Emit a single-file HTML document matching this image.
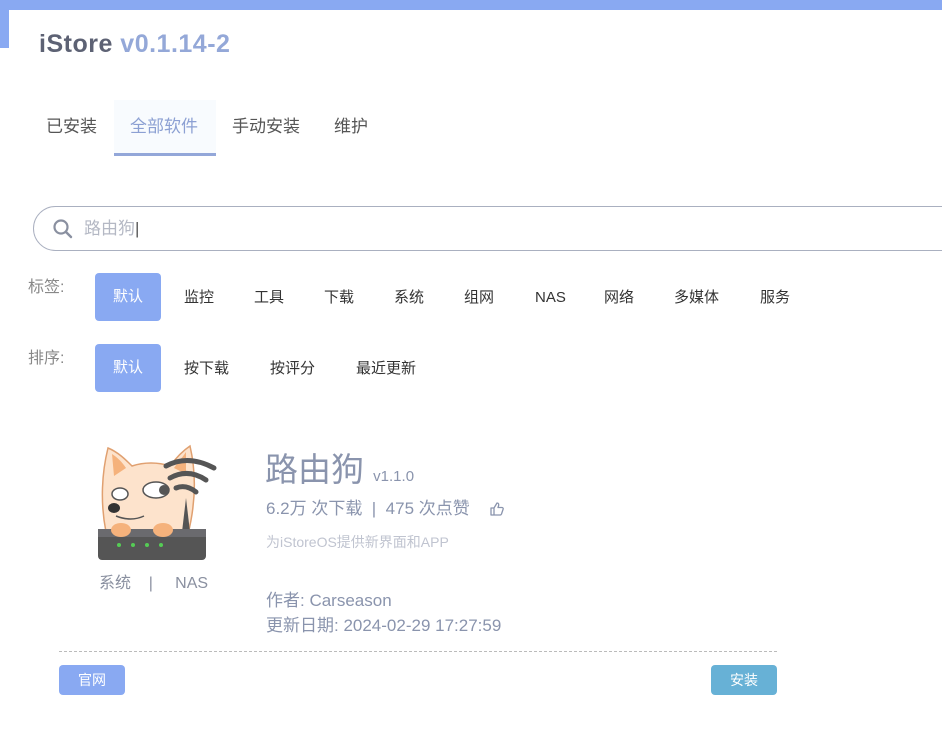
<!DOCTYPE html>
<html><head><meta charset="utf-8"><style>
*{margin:0;padding:0;box-sizing:border-box}
body{width:942px;height:730px;overflow:hidden;background:#fff;font-family:"Liberation Sans","Noto Sans CJK SC",sans-serif;position:relative}
.a{position:absolute;white-space:nowrap;line-height:1.2}
.btn{position:absolute;background:#89a9f2;border-radius:4px;color:#fff;font-size:15px;text-align:center}
.t{position:absolute;font-size:15px;color:#333;top:289px;line-height:18px}
.s{position:absolute;font-size:15px;color:#333;top:360px;line-height:18px}
</style></head><body>
<div class="a" style="left:0;top:0;width:942px;height:10px;background:#89a9f2"></div>
<div class="a" style="left:0;top:0;width:9px;height:48px;background:#89a9f2"></div>
<div class="a" style="left:9px;top:10px;width:940px;height:730px;background:#fff;border-radius:8px 0 0 0"></div>
<div class="a" style="left:39px;top:29px;font-size:25px;font-weight:bold;color:#5d6274;letter-spacing:0.5px">iStore <span style="color:#94a8d8">v0.1.14-2</span></div>
<div class="a" style="left:114px;top:100px;width:102px;height:55px;background:#f8fbfe"></div>
<div class="a" style="left:114px;top:153px;width:102px;height:3px;background:#93a7d9"></div>
<div class="a" style="left:46px;top:116px;font-size:17px;color:#555;line-height:22px">已安装</div>
<div class="a" style="left:130px;top:116px;font-size:17px;color:#8ca0d3;line-height:22px">全部软件</div>
<div class="a" style="left:232px;top:116px;font-size:17px;color:#555;line-height:22px">手动安装</div>
<div class="a" style="left:334px;top:116px;font-size:17px;color:#555;line-height:22px">维护</div>
<div class="a" style="left:33px;top:206px;width:940px;height:45px;border:1px solid #aab0c0;border-radius:23px"></div>
<svg class="a" style="left:52px;top:218px" width="22" height="22" viewBox="0 0 22 22"><circle cx="9" cy="9" r="6.5" fill="none" stroke="#8a90a0" stroke-width="2.2"/><path d="M14 14 L19 19" stroke="#8a90a0" stroke-width="2.4" stroke-linecap="round"/></svg>
<div class="a" style="left:84px;top:218px;font-size:17px;color:#b4b8c4;line-height:22px">路由狗<span style="color:#555;font-weight:100">|</span></div>
<div class="a" style="left:28px;top:278px;font-size:16px;color:#888">标签:</div>
<div class="a" style="left:28px;top:349px;font-size:16px;color:#888">排序:</div>
<div class="btn" style="left:95px;top:273px;width:66px;height:48px;line-height:48px">默认</div>
<div class="btn" style="left:95px;top:344px;width:66px;height:48px;line-height:48px">默认</div>
<div class="t" style="left:184px">监控</div><div class="t" style="left:254px">工具</div><div class="t" style="left:324px">下载</div><div class="t" style="left:394px">系统</div><div class="t" style="left:464px">组网</div><div class="t" style="left:535px;top:289px">NAS</div><div class="t" style="left:604px">网络</div><div class="t" style="left:674px">多媒体</div><div class="t" style="left:760px">服务</div>
<div class="s" style="left:184px">按下载</div><div class="s" style="left:270px">按评分</div><div class="s" style="left:356px">最近更新</div>
<svg class="a" style="left:96px;top:442px" width="122" height="120" viewBox="0 0 122 120">
<path d="M10 90 C4 60 6 30 12 6 C22 10 30 18 36 24 C48 20 62 20 74 24 C80 16 88 8 94 4 C100 30 100 60 92 92 Z" fill="#fde3cc" stroke="#e0a070" stroke-width="1.5"/>
<path d="M16 12 C22 16 26 20 30 26 L18 34 Z" fill="#f5b27c"/>
<path d="M90 10 C86 16 82 20 78 26 L90 32 Z" fill="#f5b27c"/>
<ellipse cx="24" cy="52" rx="8" ry="6" fill="#fff" stroke="#555" stroke-width="1.5"/>
<ellipse cx="60" cy="48" rx="13" ry="8" fill="#fff" stroke="#555" stroke-width="1.5"/>
<circle cx="68" cy="48" r="5" fill="#555"/>
<ellipse cx="18" cy="66" rx="6" ry="5" fill="#333"/>
<path d="M20 74 Q35 80 48 74" stroke="#555" fill="none" stroke-width="1.5"/>
<path d="M70 24 Q92 12 118 26" stroke="#555" fill="none" stroke-width="5" stroke-linecap="round"/>
<path d="M74 36 Q92 26 110 38" stroke="#555" fill="none" stroke-width="5" stroke-linecap="round"/>
<path d="M80 46 Q90 42 100 50" stroke="#555" fill="none" stroke-width="5" stroke-linecap="round"/>
<path d="M86 90 L90 56 L94 90 Z" fill="#555"/>
<rect x="2" y="87" width="108" height="31" rx="4" fill="#555"/>
<rect x="2" y="87" width="108" height="8" fill="#6a6a6e"/>
<ellipse cx="25" cy="88" rx="10" ry="7" fill="#f5b27c"/><ellipse cx="67" cy="88" rx="10" ry="7" fill="#f5b27c"/>
<circle cx="23" cy="103" r="2" fill="#5c5"/><circle cx="37" cy="103" r="2" fill="#5c5"/><circle cx="51" cy="103" r="2" fill="#5c5"/><circle cx="65" cy="103" r="2" fill="#5c5"/>
</svg>
<div class="a" style="left:99px;top:574px;font-size:16px;color:#8a90a0">系统 &nbsp;&nbsp; | &nbsp;&nbsp;&nbsp; NAS</div>
<div class="a" style="left:265px;top:450px;font-size:33px;color:#8a94ad">路由狗 <span style="font-size:15px;color:#8a94ad">v1.1.0</span></div>
<div class="a" style="left:266px;top:499px;font-size:17px;color:#8a94ad">6.2万 次下载 &nbsp;| &nbsp;475 次点赞</div>
<svg class="a" style="left:489px;top:501px" width="16" height="16" viewBox="0 0 16 16"><path d="M2 7 H5 V14 H2 Z M5 7 L8 2 C9.5 2 10 3 9.5 5 L9 6.5 H13 C14 6.5 14.5 7.5 14 8.5 L12.5 13 C12.2 13.7 11.7 14 11 14 H5" fill="none" stroke="#8a94ad" stroke-width="1.3" stroke-linejoin="round"/></svg>
<div class="a" style="left:266px;top:534px;font-size:14px;color:#c0c4d0">为iStoreOS提供新界面和APP</div>
<div class="a" style="left:266px;top:591px;font-size:17px;color:#8a94ad">作者: Carseason</div>
<div class="a" style="left:266px;top:616px;font-size:17px;color:#8a94ad">更新日期: 2024-02-29 17:27:59</div>
<div class="a" style="left:59px;top:651px;width:718px;border-top:1px dashed #bbb"></div>
<div class="btn" style="left:59px;top:665px;width:66px;height:30px;line-height:30px;font-size:14px">官网</div>
<div class="btn" style="left:711px;top:665px;width:66px;height:30px;line-height:30px;font-size:14px;background:#67b1d6">安装</div>
</body></html>
